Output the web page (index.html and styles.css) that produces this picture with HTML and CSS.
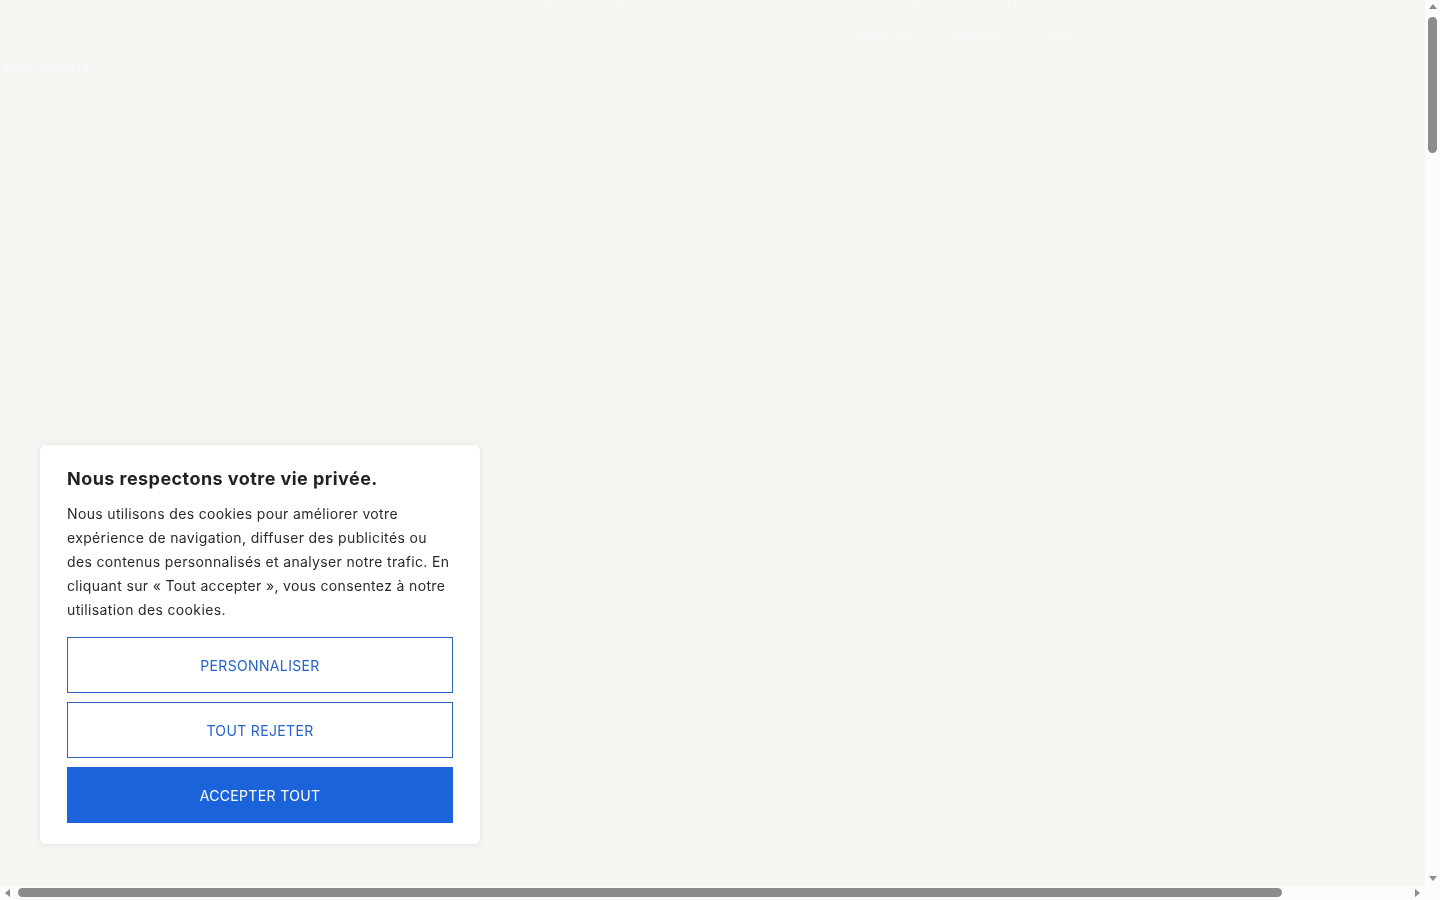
FILE: index.html
```html
<!DOCTYPE html>
<html lang="fr">
<head>
  <meta charset="UTF-8" />
  <meta name="viewport" content="width=device-width, initial-scale=1.0" />
  <title>Accueil</title>
  <link rel="stylesheet" href="styles.css">
</head>
<body>

<header class="site-header">
  <div class="brand">
    <span class="brand-link">Mon compte</span>
  </div>
  <nav class="top-nav">
    <a href="#">Nouveautés</a>
    <a href="#">Femme</a>
    <a href="#">Homme</a>
    <a href="#">Maison</a>
    <a href="#">Beauté</a>
    <a href="#">Marques</a>
  </nav>
  <div class="sub-nav">
    <a href="#">Rechercher</a>
    <a href="#">Boutiques</a>
    <a href="#">Panier</a>
  </div>
</header>

<main class="page"></main>

<div class="cookie-banner">
  <h2>Nous respectons votre vie privée.</h2>
  <p>Nous utilisons des cookies pour améliorer votre expérience de navigation, diffuser des publicités ou des contenus personnalisés et analyser notre trafic. En cliquant sur « Tout accepter », vous consentez à notre utilisation des cookies.</p>
  <div class="cookie-actions">
    <button class="btn-outline">Personnaliser</button>
    <button class="btn-outline">Tout rejeter</button>
    <button class="btn-primary">Accepter tout</button>
  </div>
</div>

<!-- window scrollbars as seen in the capture -->
<div class="scroll-v" aria-hidden="true">
  <span class="arrow arrow-up"></span>
  <span class="thumb-v"></span>
  <span class="arrow arrow-down"></span>
</div>
<div class="scroll-h" aria-hidden="true">
  <span class="arrow arrow-left"></span>
  <span class="thumb-h"></span>
  <span class="arrow arrow-right"></span>
</div>
<div class="scroll-corner" aria-hidden="true"></div>

</body>
</html>
```

FILE: styles.css
```css
body {
  font-family: Inter, "Noto Sans", sans-serif;
  margin: 0;
  background: #f6f5f1;
  width: 1570px;
}
.site-header {
  display: flex;
  height: 110px;
  color: #fbfbf9;
}
.brand {
  width: 122px;
  border-right: 1px solid #f9f9f6;
  display: flex;
  align-items: center;
  padding-top: 24px;
  box-sizing: border-box;
}
.brand-link {
  font-size: 11px;
  letter-spacing: 1px;
  text-transform: uppercase;
  padding-left: 4px;
}
.top-nav {
  display: flex;
  gap: 60px;
  padding: 0 0 0 370px;
  height: 16px;
}
.top-nav a, .sub-nav a {
  color: #f9f9f6;
  text-decoration: none;
  font-size: 11px;
}
.sub-nav {
  display: flex;
  gap: 40px;
  padding-top: 28px;
  margin-left: -200px;
}
.page {
  height: 5500px;
}
.cookie-banner {
  position: fixed;
  left: 40px;
  bottom: 56px;
  width: 440px;
  box-sizing: border-box;
  padding: 22px 27px 21px;
  background: #fff;
  border-radius: 6px;
  box-shadow: 0 0 6px rgba(0, 0, 0, 0.08);
  color: #222;
}
.cookie-banner h2 {
  margin: 0 0 11px;
  font-size: 18px;
  font-weight: 700;
  line-height: 24px;
  letter-spacing: 0.45px;
}
.cookie-banner p {
  margin: 0 0 15px;
  font-size: 14px;
  line-height: 24px;
  letter-spacing: 0.35px;
  color: #2a2a2a;
}
.cookie-actions {
  display: flex;
  flex-direction: column;
  gap: 9px;
}
.cookie-actions button {
  height: 56px;
  font-family: inherit;
  font-size: 14px;
  letter-spacing: 0.35px;
  text-transform: uppercase;
  cursor: pointer;
}
.btn-outline {
  background: #fff;
  border: 1px solid #2a62b8;
  color: #2563c9;
}
.btn-primary {
  background: #1a63db;
  border: none;
  color: #fff;
}

/* scrollbars */
.scroll-v, .scroll-h, .scroll-corner {
  position: fixed;
  background: #fbfbfb;
}
.scroll-v {
  top: 0;
  right: 0;
  width: 15px;
  height: 885px;
  display: flex;
  flex-direction: column;
  align-items: center;
}
.scroll-h {
  left: 0;
  bottom: 0;
  width: 1425px;
  height: 15px;
  display: flex;
  align-items: center;
}
.scroll-corner {
  right: 0;
  bottom: 0;
  width: 15px;
  height: 15px;
}
.thumb-v {
  width: 9px;
  height: 136px;
  margin-top: 8px;
  border-radius: 5px;
  background: #8c8c8c;
}
.thumb-h {
  height: 9px;
  width: 1264px;
  margin-left: 8px;
  border-radius: 5px;
  background: #8c8c8c;
}
.arrow {
  width: 0;
  height: 0;
  border: 4px solid transparent;
}
.arrow-up {
  margin-top: 4px;
  border-bottom: 5px solid #8a8a8a;
  border-top-width: 0;
}
.arrow-down {
  margin-top: auto;
  margin-bottom: 4px;
  border-top: 5px solid #8a8a8a;
  border-bottom-width: 0;
}
.arrow-left {
  margin-left: 5px;
  border-right: 5px solid #8a8a8a;
  border-left-width: 0;
}
.arrow-right {
  margin-left: auto;
  margin-right: 5px;
  border-left: 5px solid #8a8a8a;
  border-right-width: 0;
}
```
